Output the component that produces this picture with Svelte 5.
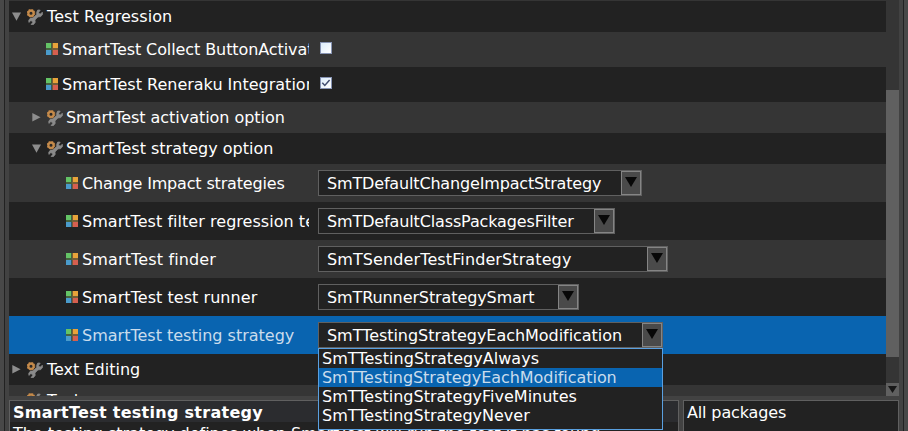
<script>
  const settings = [
    { kind: 'group', depth: 0, open: true, label: 'Test Regression', ls: 0.08, h: 31 },
    { kind: 'check', depth: 1, label: 'SmartTest Collect ButtonActivation', ls: -0.09, h: 35, on: false },
    { kind: 'check', depth: 1, label: 'SmartTest Reneraku Integration', ls: 0, h: 35, on: true },
    { kind: 'group', depth: 1, open: false, label: 'SmartTest activation option', ls: -0.04, h: 31 },
    { kind: 'group', depth: 1, open: true, label: 'SmartTest strategy option', ls: 0, h: 31 },
    { kind: 'combo', depth: 2, label: 'Change Impact strategies', ls: -0.17, value: 'SmTDefaultChangeImpactStrategy', vls: -0.16, w: 324, h: 38 },
    { kind: 'combo', depth: 2, label: 'SmartTest filter regression tests', ls: 0.04, value: 'SmTDefaultClassPackagesFilter', vls: -0.13, w: 297, h: 38 },
    { kind: 'combo', depth: 2, label: 'SmartTest finder', ls: 0.14, value: 'SmTSenderTestFinderStrategy', vls: 0.11, w: 350, h: 38 },
    { kind: 'combo', depth: 2, label: 'SmartTest test runner', ls: 0.05, value: 'SmTRunnerStrategySmart', vls: -0.1, w: 261, h: 38 },
    { kind: 'combo', depth: 2, label: 'SmartTest testing strategy', ls: 0, value: 'SmTTestingStrategyEachModification', vls: -0.04, w: 345, h: 38, selected: true },
    { kind: 'group', depth: 0, open: false, label: 'Text Editing', ls: 0, h: 31 },
    { kind: 'group', depth: 0, open: false, label: 'Tools', ls: 0, h: 31 }
  ];
  const choices = ['SmTTestingStrategyAlways', 'SmTTestingStrategyEachModification', 'SmTTestingStrategyFiveMinutes', 'SmTTestingStrategyNever'];
</script>

<div class="window">
  <div class="inner">
    <div class="list">
      <div class="rows">
        {#each settings as s}
          <div class="row {s.kind} d{s.depth}" class:selected={s.selected} style="height:{s.h}px">
            <div class="name">
              {#if s.kind === 'group'}
                <svg class="arrow" width="9" height="9" viewBox="0 0 9 9"><path d={s.open ? 'M0 .5h9L4.5 8.8z' : 'M.3 0v8.6L8.6 4.3z'} fill="#8d8d8d" /></svg>
                <svg class="tool" width="16" height="16" viewBox="0 0 16 16">
                  <path d="M13.2 1.2 11.6 3.3l.4 1.4 1.5.3 1.8-1.8.2 2.2-1.8 2.2-2.8.3-3 3.1.3 2.3-1.6 2.1-2.5.1 1.6-1.9-.4-1.5-1.6-.4-1.8 1.7-.1-2.2 1.7-2.1 2.5-.1 3.7-3.6.1-2.4L10.8 1z" fill="#8a8a8a" stroke="#8a8a8a" stroke-width=".8" />
                  <circle cx="4" cy="4.2" r="3.7" fill="none" stroke="#a87440" stroke-width="1.2" stroke-dasharray="1.9 1" />
                  <circle cx="4" cy="4.2" r="2.6" fill="#272727" stroke="#c58b4b" stroke-width="2.2" />
                </svg>
              {:else}
                <svg class="tiles" width="12" height="12" viewBox="0 0 12 12">
                  <path fill="#765e36" d="M0 0h12v12H0z" />
                  <path fill="#64c466" d="M0 0h5v5H0z" /><path fill="#e8a33a" d="M7 0h5v5H7z" />
                  <path fill="#4a9bcb" d="M0 7h5v5H0z" /><path fill="#d55f50" d="M7 7h5v5H7z" />
                  <path fill="#45633f" d="M0 5h5v2H0zM5 0h1v7H5z" /><path fill="#35556b" d="M5 7h1v5H5z" />
                </svg>
              {/if}
              <span class="label" style="letter-spacing:{s.ls}px">{s.label}</span>
            </div>
            {#if s.kind === 'check'}
              <div class="box">
                {#if s.on}<svg width="10" height="10" viewBox="0 0 10 10"><path d="M1.3 4.8 3.8 7.5 8.6 2" fill="none" stroke="#414d70" stroke-width="1.5" /></svg>{/if}
              </div>
            {:else if s.kind === 'combo'}
              <div class="select" style="width:{s.w}px">
                <span style="letter-spacing:{s.vls}px">{s.value}</span>
                <div class="btn"><svg width="12" height="10" viewBox="0 0 12 10"><path d="M0 0h12L6 10z" fill="#080808" /></svg></div>
                {#if s.selected}
                  <div class="menu">
                    {#each choices as c}<div class:active={c === s.value}>{c}</div>{/each}
                  </div>
                {/if}
              </div>
            {/if}
          </div>
        {/each}
      </div>
      <div class="scroll">
        <div class="thumb"></div>
        <div class="down"><svg width="9" height="7" viewBox="0 0 9 7"><path d="M0 0h9L4.5 7z" fill="#171717" /></svg></div>
      </div>
    </div>
    <div class="bottom">
      <div class="panel desc">
        <div class="title">SmartTest testing strategy</div>
        <div class="body">The testing strategy defines when SmartTest will run the test it has found.</div>
      </div>
      <div class="panel pkgs">All packages</div>
    </div>
  </div>
</div>

<style>
  .window { box-sizing: border-box; width: 908px; height: 431px; padding: 0 4px; background: #484848; overflow: hidden; font: 16px/19px "DejaVu Sans", sans-serif; color: #fff; white-space: nowrap; }
  .inner { box-sizing: border-box; height: 431px; border: solid #222; border-width: 0 1px; padding: 0 4px; background: #424242; display: flex; flex-direction: column; gap: 4px; }
  .list { display: flex; height: 396px; flex: none; background: #353535; }
  .rows { width: 877px; padding-top: 1px; box-sizing: border-box; height: 396px; }
  .row { display: flex; align-items: center; background: #353535; }
  .row:nth-child(odd) { background: #222; }
  .row:nth-child(12) { max-height: 11px; align-items: flex-start; overflow: hidden; }
  .row:nth-child(12) .name { height: 31px; }
  .row.selected { background: #0964b0; }
  .name { box-sizing: border-box; width: 300px; height: 100%; display: flex; align-items: center; flex: none; overflow: hidden; padding-left: 3px; }
  .d1 .name { padding-left: 23px; }
  .check .name { padding-left: 37px; }
  .combo .name { padding-left: 57px; }
  .arrow { margin-right: 6px; flex: none; }
  .tool { margin-right: 4px; flex: none; }
  .d1 .tool { margin-right: 3px; }
  .tiles { margin-right: 4px; flex: none; }
  .check .tiles { margin-bottom: 1px; }
  .selected .label { color: #c9dcec; }
  .box { box-sizing: border-box; width: 12px; height: 12px; margin: 0 0 3px 11px; border: 1px solid #8794b4; background: linear-gradient(135deg, #dcecfb, #fff); }
  .box svg { display: block; }
  .select { position: relative; box-sizing: border-box; height: 26px; margin-left: 9px; border: 1px solid #606060; background: #222; display: flex; align-items: center; justify-content: space-between; padding-left: 8px; }
  .btn { box-sizing: border-box; width: 20px; height: 24px; flex: none; border: 1px solid #858585; background: #4a4a4a; display: flex; justify-content: center; align-items: center; padding-bottom: 2px; }
  .menu { position: absolute; z-index: 2; left: -1px; top: 25px; box-sizing: border-box; width: 345px; height: 82px; border: 1px solid #5aa0e0; background: #222; }
  .menu div { height: 19px; padding-left: 3px; }
  .menu div:first-child { letter-spacing: .04px; }
  .menu .active { background: #0964b0; color: #c9dcec; letter-spacing: -.05px; }
  .scroll { width: 13px; display: flex; flex-direction: column; justify-content: space-between; padding-top: 90px; box-sizing: border-box; }
  .thumb { height: 267px; background: #606060; }
  .down { height: 13px; background: #606060; display: flex; justify-content: center; padding-top: 3px; box-sizing: border-box; }
  .bottom { display: flex; gap: 4px; height: 31px; }
  .panel { box-sizing: border-box; border: 1px solid #606060; border-bottom: 0; background: #222; overflow: hidden; }
  .desc { width: 670px; }
  .title { height: 21px; line-height: 23px; padding-left: 3px; background: #2b2c2f; font-weight: bold; letter-spacing: .28px; }
  .body { padding: 2px 0 0 3px; letter-spacing: -.03px; }
  .pkgs { width: 216px; line-height: 24px; padding-left: 3px; letter-spacing: -.14px; }
</style>
